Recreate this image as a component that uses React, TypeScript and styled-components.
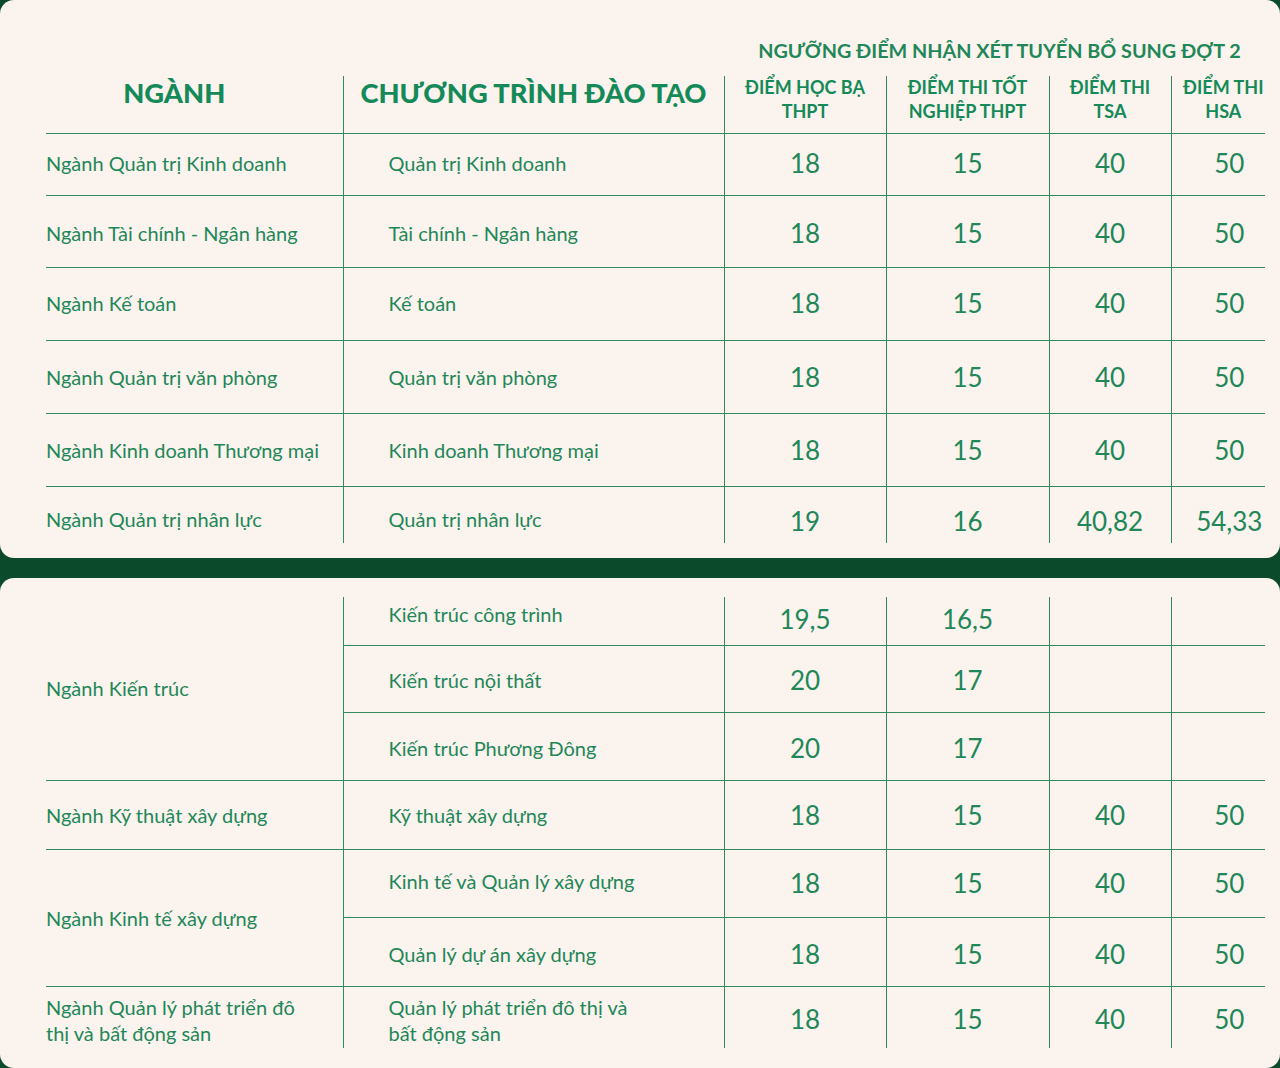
import React from 'react';
import styled, { createGlobalStyle } from 'styled-components';

const GREEN = '#1f8758';
const LINE = '#2f8a5e';

const GlobalStyle = createGlobalStyle`
  html, body {
    margin: 0;
    padding: 0;
    background: #0b4a2b;
  }
  body {
    font-family: Lato, "Open Sans", "Noto Sans", sans-serif;
    color: ${GREEN};
  }
`;

const Page = styled.div`
  width: 1280px;
  height: 1068px;
  display: flex;
  flex-direction: column;
  gap: 20px;
  overflow: hidden;
`;

const Panel = styled.section<{ $top: number; $bottom: number; $height: number }>`
  background: #faf3ee;
  height: ${(p) => p.$height}px;
  box-sizing: border-box;
  padding: ${(p) => p.$top}px 0 ${(p) => p.$bottom}px 46px;
  border-radius: 14px;
`;

const Table = styled.table`
  width: 1219px;
  table-layout: fixed;
  border-collapse: collapse;
`;

const Row = styled.tr<{ $h: number }>`
  height: ${(p) => p.$h}px;
`;

const TitleCell = styled.th`
  padding: 0 0 4px 10px;
  text-align: center;
  vertical-align: middle;
  font-size: 19.8px;
  line-height: 1;
  font-weight: 700;
  color: ${GREEN};
`;

const HeadCell = styled.th<{ $big?: boolean; $last?: boolean; $left?: number; $right?: number }>`
  padding: 0 ${(p) => p.$right ?? 0}px ${(p) => (p.$big ? 23 : 9)}px ${(p) => p.$left ?? 0}px;
  text-align: center;
  vertical-align: middle;
  font-size: ${(p) => (p.$big ? 27.3 : 18)}px;
  font-weight: ${(p) => (p.$big ? 900 : 700)};
  line-height: ${(p) => (p.$big ? 1 : 1.3)};
  color: #148a58;
  border-bottom: 1.5px solid ${LINE};
  border-right: ${(p) => (p.$last ? 'none' : `1.5px solid ${LINE}`)};
`;

const Cell = styled.td<{
  $kind: 'major' | 'program' | 'num';
  $last?: boolean;
  $end?: boolean;
  $shift?: number;
}>`
  padding: ${(p) => Math.max(p.$shift ?? 0, 0)}px 0 ${(p) => Math.max(-(p.$shift ?? 0), 0)}px
    ${(p) => (p.$kind === 'program' ? 45 : p.$end ? 22 : 0)}px;
  text-align: ${(p) => (p.$kind === 'num' ? 'center' : 'left')};
  vertical-align: middle;
  font-size: ${(p) => (p.$kind === 'num' ? 26 : 20)}px;
  line-height: ${(p) => (p.$kind === 'num' ? 1 : '26px')};
  color: ${GREEN};
  border-right: ${(p) => (p.$end ? 'none' : `1.5px solid ${LINE}`)};
  border-bottom: ${(p) => (p.$last ? 'none' : `1.5px solid ${LINE}`)};
`;

const Cols = () => (
  <colgroup>
    <col style={{ width: 297 }} />
    <col style={{ width: 381 }} />
    <col style={{ width: 162 }} />
    <col style={{ width: 163 }} />
    <col style={{ width: 122 }} />
    <col style={{ width: 94 }} />
  </colgroup>
);

type Line = {
  major?: React.ReactNode;
  span?: number;
  program: React.ReactNode;
  scores: string[];
  h: number;
  // vertical nudge of the text in the row (px, positive = down)
  shift?: number;
  textShift?: number;
};

const top: Line[] = [
  { major: 'Ngành Quản trị Kinh doanh', program: 'Quản trị Kinh doanh', scores: ['18', '15', '40', '50'], h: 62, shift: -2 },
  { major: 'Ngành Tài chính - Ngân hàng', program: 'Tài chính - Ngân hàng', scores: ['18', '15', '40', '50'], h: 72, shift: 4 },
  { major: 'Ngành Kế toán', program: 'Kế toán', scores: ['18', '15', '40', '50'], h: 73, shift: -2 },
  { major: 'Ngành Quản trị văn phòng', program: 'Quản trị văn phòng', scores: ['18', '15', '40', '50'], h: 73 },
  { major: 'Ngành Kinh doanh Thương mại', program: 'Kinh doanh Thương mại', scores: ['18', '15', '40', '50'], h: 73 },
  { major: 'Ngành Quản trị nhân lực', program: 'Quản trị nhân lực', scores: ['19', '16', '40,82', '54,33'], h: 57, shift: 12, textShift: 8 },
];

const bottom: Line[] = [
  { major: 'Ngành Kiến trúc', span: 3, program: 'Kiến trúc công trình', scores: ['19,5', '16,5', '', ''], h: 48, shift: -4, textShift: -14 },
  { program: 'Kiến trúc nội thất', scores: ['20', '17', '', ''], h: 67, shift: 3 },
  { program: 'Kiến trúc Phương Đông', scores: ['20', '17', '', ''], h: 68, shift: 3 },
  { major: 'Ngành Kỹ thuật xây dựng', program: 'Kỹ thuật xây dựng', scores: ['18', '15', '40', '50'], h: 69 },
  { major: 'Ngành Kinh tế xây dựng', span: 2, program: 'Kinh tế và Quản lý xây dựng', scores: ['18', '15', '40', '50'], h: 68, textShift: -4 },
  { program: 'Quản lý dự án xây dựng', scores: ['18', '15', '40', '50'], h: 69, shift: 4 },
  {
    major: (
      <>
        Ngành Quản lý phát triển đô
        <br />
        thị và bất động sản
      </>
    ),
    program: (
      <>
        Quản lý phát triển đô thị và
        <br />
        bất động sản
      </>
    ),
    scores: ['18', '15', '40', '50'],
    h: 62,
    shift: 4,
    textShift: 6,
  },
];

const Body = ({ lines }: { lines: Line[] }) => {
  const n = lines.length;
  return (
    <tbody>
      {lines.map((l, i) => {
        const last = i === n - 1;
        const majorLast = l.span ? i + l.span - 1 === n - 1 : last;
        const textShift = l.textShift ?? l.shift;
        return (
          <Row key={i} $h={l.h}>
            {l.major !== undefined && (
              <Cell $kind="major" rowSpan={l.span} $last={majorLast} $shift={l.span ? 0 : textShift}>
                {l.major}
              </Cell>
            )}
            <Cell $kind="program" $last={last} $shift={textShift}>
              {l.program}
            </Cell>
            {l.scores.map((s, j) => (
              <Cell key={j} $kind="num" $last={last} $end={j === 3} $shift={l.shift}>
                {s}
              </Cell>
            ))}
          </Row>
        );
      })}
    </tbody>
  );
};

const App: React.FC = () => (
  <>
    <GlobalStyle />
    <Page>
      <Panel $top={30} $bottom={15} $height={558}>
        <Table>
          <Cols />
          <thead>
            <Row $h={46}>
              <TitleCell colSpan={2} />
              <TitleCell colSpan={4}>NGƯỠNG ĐIỂM NHẬN XÉT TUYỂN BỔ SUNG ĐỢT 2</TitleCell>
            </Row>
            <Row $h={57}>
              <HeadCell $big $right={40}>NGÀNH</HeadCell>
              <HeadCell $big>CHƯƠNG TRÌNH ĐÀO TẠO</HeadCell>
              <HeadCell>
                ĐIỂM HỌC BẠ
                <br />
                THPT
              </HeadCell>
              <HeadCell>
                ĐIỂM THI TỐT
                <br />
                NGHIỆP THPT
              </HeadCell>
              <HeadCell>
                ĐIỂM THI
                <br />
                TSA
              </HeadCell>
              <HeadCell $last $left={10}>
                ĐIỂM THI
                <br />
                HSA
              </HeadCell>
            </Row>
          </thead>
          <Body lines={top} />
        </Table>
      </Panel>
      <Panel $top={19} $bottom={20} $height={490}>
        <Table>
          <Cols />
          <Body lines={bottom} />
        </Table>
      </Panel>
    </Page>
  </>
);

export default App;
